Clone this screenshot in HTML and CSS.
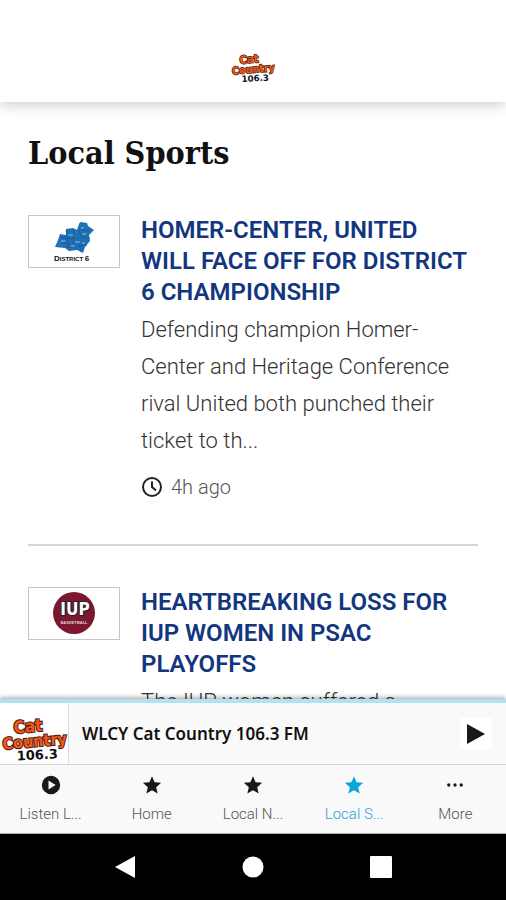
FILE: index.html
```html
<!DOCTYPE html>
<html lang="en">
<head>
<meta charset="utf-8">
<meta name="viewport" content="width=device-width, initial-scale=1">
<title>Local Sports</title>
<link rel="stylesheet" href="styles.css">
</head>
<body>
<header class="topbar">
  <svg class="topbar-logo" viewBox="0 0 68 60" role="img" aria-label="Cat Country 106.3">
    <g class="logo-word">
      <text x="14" y="30" font-size="17" transform="rotate(-5 14 30)">Cat</text>
      <text x="3" y="46" font-size="16" transform="rotate(-5 3 46)">Country</text>
    </g>
    <text class="logo-number" x="17" y="57" font-size="13" transform="rotate(-3 17 57)">106.3</text>
  </svg>
</header>

<main class="content">
  <h1 class="page-title">Local Sports</h1>

  <article class="story">
    <div class="thumb">
      <svg viewBox="0 0 90 51" role="img" aria-label="District 6">
        <path fill="#1f70b5" d="M51 6l7 1 1 3 6 4-5 5 1 6-5 6-2 6-6-3-8 1-4-3-10-1 3-7 2-6 6 1v-6l7-1 4 2 2-6z"/>
        <path fill="none" stroke="#175a9a" stroke-width=".8" d="M37 14l2 9 10-1 3 14M50 13l2 8 9 1M31 21l8 2-1 9 12-2 8-1M45 13l-1 9 1 10M52 14l9 1M33 27l8 1"/>
        <path stroke="#8cc0e6" d="M39 19h5M46 26h5M53 18h4M32 25h4M42 30h4M53 27h3M52 12h3"/>
        <text class="district" x="25" y="45"><tspan font-size="8">D</tspan>ISTRICT <tspan font-size="8">6</tspan></text>
      </svg>
    </div>
    <div class="story-body">
      <h2 class="story-title"><a href="#">HOMER-CENTER, UNITED WILL FACE OFF FOR DISTRICT 6 CHAMPIONSHIP</a></h2>
      <p class="summary">Defending champion Homer-Center and Heritage Conference rival United both punched their ticket to th...</p>
      <p class="age">
        <svg viewBox="0 0 22 22" aria-hidden="true"><circle cx="11" cy="11" r="9"/><path d="M11 5.500V11l4 3.500"/></svg>
        <span>4h ago</span>
      </p>
    </div>
  </article>

  <article class="story">
    <div class="thumb">
      <svg viewBox="0 0 90 51" role="img" aria-label="IUP Basketball">
        <circle cx="45" cy="25" r="21" fill="#7b1830"/>
        <text class="iup" x="46" y="27">IUP</text>
        <text class="iup-sub" x="45" y="36">BASKETBALL</text>
      </svg>
    </div>
    <div class="story-body">
      <h2 class="story-title"><a href="#">HEARTBREAKING LOSS FOR IUP WOMEN IN PSAC PLAYOFFS</a></h2>
      <p class="summary">The IUP women suffered a</p>
    </div>
  </article>
</main>

<section class="player" aria-label="Player">
  <div class="player-art">
    <svg viewBox="0 0 68 60" role="img" aria-label="Cat Country 106.3">
      <g class="logo-word">
        <text x="14" y="30" font-size="17" transform="rotate(-5 14 30)">Cat</text>
        <text x="3" y="46" font-size="16" transform="rotate(-5 3 46)">Country</text>
      </g>
      <text class="logo-number" x="17" y="57" font-size="13" transform="rotate(-3 17 57)">106.3</text>
    </svg>
  </div>
  <p class="player-title">WLCY Cat Country 106.3 FM</p>
  <button class="play" type="button" aria-label="Play"><svg viewBox="0 0 32 32"><path d="M7 6l18 10L7 26z"/></svg></button>
</section>

<nav class="tabs">
  <a href="#"><svg viewBox="0 0 24 24"><path fill-rule="evenodd" d="M12 1a11 11 0 1 0 0 22 11 11 0 0 0 0-22zM9 6.500l8.500 5.500L9 17.500z"/></svg>Listen L...</a>
  <a href="#"><svg viewBox="0 0 24 24"><path d="M12 1.500l3.100 7.200 7.900.7-6 5.200 1.800 7.700-6.800-4.100-6.800 4.100L7 14.600 1 9.400l7.900-.7z"/></svg>Home</a>
  <a href="#"><svg viewBox="0 0 24 24"><path d="M12 1.500l3.100 7.200 7.900.7-6 5.200 1.800 7.700-6.800-4.100-6.800 4.100L7 14.600 1 9.400l7.900-.7z"/></svg>Local N...</a>
  <a href="#" class="active" aria-current="page"><svg viewBox="0 0 24 24"><path d="M12 1.500l3.100 7.200 7.900.7-6 5.200 1.800 7.700-6.800-4.100-6.800 4.100L7 14.600 1 9.400l7.900-.7z"/></svg>Local S...</a>
  <a href="#"><svg viewBox="0 0 24 24"><circle cx="4.500" cy="12" r="2"/><circle cx="12" cy="12" r="2"/><circle cx="19.500" cy="12" r="2"/></svg>More</a>
</nav>

<div class="system">
  <button type="button" aria-label="Back"><svg viewBox="0 0 24 24"><path d="M2 12L22 1v22z"/></svg></button>
  <button type="button" aria-label="Home"><svg viewBox="0 0 24 24"><circle cx="12" cy="12" r="10.500"/></svg></button>
  <button type="button" aria-label="Recent apps"><svg viewBox="0 0 24 24"><rect x="1" y="1" width="22" height="22" rx="1"/></svg></button>
</div>
</body>
</html>
```
FILE: styles.css
```css
* { box-sizing: border-box; }

body {
  display: flex;
  flex-direction: column;
  height: 100vh;
  margin: 0;
  background: #fff;
  color: #111;
  font-family: Roboto, "Liberation Sans", sans-serif;
}

h1, h2, p { margin: 0; }
a { color: inherit; text-decoration: none; }
button { padding: 0; border: 0; background: none; }
svg { display: block; }

.logo-word {
  fill: #f4581a;
  stroke: #4a1a08;
  stroke-width: 2px;
  paint-order: stroke;
  font-family: "DejaVu Sans Condensed", "DejaVu Sans", sans-serif;
  font-weight: 700;
}
.logo-number {
  fill: #111;
  font-family: "DejaVu Sans", sans-serif;
  font-weight: 700;
}

.topbar {
  display: flex;
  flex: none;
  justify-content: center;
  padding: 44px 0 18px;
  background: #fff;
  box-shadow: 0 2px 14px rgba(0, 0, 0, .22);
  z-index: 1;
}
.topbar-logo { width: 46px; height: 40px; }

.content {
  flex: 1;
  min-height: 0;
  overflow: hidden;
  padding: 30px 28px 0;
}
.page-title {
  font: 700 32px/42px "DejaVu Serif Condensed", "DejaVu Serif", serif;
}

.story {
  display: flex;
  gap: 21px;
  padding: 41px 0 45px;
}
.story + .story { border-top: 2px solid #d6d6d6; }
.thumb {
  flex: none;
  align-self: flex-start;
  width: 92px;
  border: 1px solid #c6c6c6;
}
.district { font: 700 6px "Liberation Sans", sans-serif; fill: #111; }
.iup {
  font: 700 17px "DejaVu Sans Condensed", sans-serif;
  fill: #fff;
  stroke: #222;
  stroke-width: 2px;
  paint-order: stroke;
  text-anchor: middle;
}
.iup-sub { font: 700 4px "Liberation Sans", sans-serif; fill: #e5cbd0; text-anchor: middle; }
.story-body { flex: 1; min-width: 0; }
.story-title {
  padding-right: 8px;
  color: #12367f;
  font-size: 24px;
  font-weight: 600;
  line-height: 31px;
}
.summary {
  margin-top: 3px;
  color: #333;
  font-size: 22px;
  font-weight: 300;
  line-height: 37px;
}
.age {
  display: flex;
  align-items: center;
  gap: 8px;
  margin-top: 16px;
  color: #555;
  font-size: 20px;
  font-weight: 300;
  line-height: 24px;
}
.age svg { width: 22px; height: 22px; fill: none; stroke: #222; stroke-width: 2px; }

.player {
  display: flex;
  flex: none;
  align-items: center;
  border-top: 4px solid #b5e1ef;
  border-bottom: 1px solid #d5d5d5;
  background: #f9f9f9;
  box-shadow: 0 -1px 5px rgba(0, 0, 0, .4);
  z-index: 1;
}
.player-art { border-right: 1px solid #ddd; background: #fff; }
.player-art svg { width: 68px; height: 61px; }
.player-title {
  flex: 1;
  padding-left: 13px;
  font: 600 17px/24px "Noto Sans", "Open Sans", sans-serif;
}
.play { margin-right: 14px; background: #fff; }
.play svg { width: 32px; height: 32px; fill: #181818; }

.tabs {
  display: grid;
  flex: none;
  grid-template-columns: repeat(5, 1fr);
  padding: 10px 0 9px;
  border-bottom: 1px solid #aaa;
  background: #f9f9f9;
  z-index: 1;
}
.tabs a {
  display: flex;
  flex-direction: column;
  align-items: center;
  gap: 9px;
  color: #555;
  font-size: 15px;
  font-weight: 300;
  line-height: 20px;
}
.tabs svg { width: 20px; height: 20px; fill: #181818; }
.tabs .active { color: #1aa5d8; }
.tabs .active svg { fill: #0aa5da; }

.system {
  display: flex;
  flex: none;
  justify-content: center;
  gap: 104px;
  padding: 21px 0;
  background: #000;
}
.system svg { width: 24px; height: 24px; fill: #fff; }
```
